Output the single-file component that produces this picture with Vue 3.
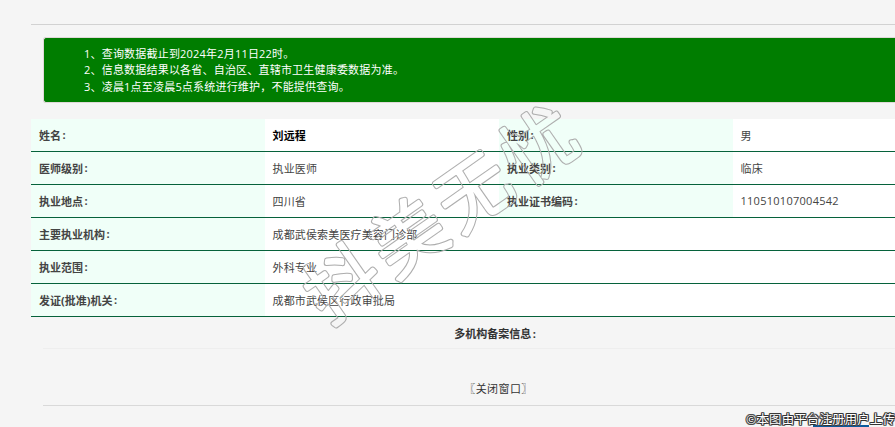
<script setup>
const rows = [
  [{ t: '姓名' }, { t: '刘远程', strong: true }, { t: '性别' }, { t: '男' }],
  [{ t: '医师级别' }, { t: '执业医师' }, { t: '执业类别' }, { t: '临床' }],
  [{ t: '执业地点' }, { t: '四川省' }, { t: '执业证书编码' }, { t: '110510107004542' }],
]
const wide = [
  ['主要执业机构', '成都武侯索美医疗美容门诊部'],
  ['执业范围', '外科专业'],
  ['发证(批准)机关', '成都市武侯区行政审批局'],
]
const notes = [
  '1、查询数据截止到2024年2月11日22时。',
  '2、信息数据结果以各省、自治区、直辖市卫生健康委数据为准。',
  '3、凌晨1点至凌晨5点系统进行维护\uFF0C不能提供查询。',
]
</script>

<template>
  <div class="page">
    <div class="wrap">
      <hr class="rule top" />
      <div class="alert">
        <p v-for="n in notes" :key="n">{{ n }}</p>
      </div>
      <div class="table">
        <div v-for="(r, i) in rows" :key="i" class="row">
          <div class="cell label">{{ r[0].t }}<span class="colon">:</span></div>
          <div class="cell value" :class="{ strong: r[1].strong }">{{ r[1].t }}</div>
          <div class="cell label">{{ r[2].t }}<span class="colon">:</span></div>
          <div class="cell value num">{{ r[3].t }}</div>
        </div>
        <div v-for="w in wide" :key="w[0]" class="row">
          <div class="cell label">{{ w[0] }}<span class="colon">:</span></div>
          <div class="cell value span">{{ w[1] }}</div>
        </div>
      </div>
      <div class="multi">多机构备案信息<span class="colon">:</span></div>
      <div class="close">〖关闭窗口〗</div>
      <hr class="rule bottom" />
    </div>
    <svg class="stamp" width="895" height="427" viewBox="0 0 895 427">
      <defs>
        <mask id="stamp-ring" maskUnits="userSpaceOnUse" x="0" y="0" width="895" height="427">
          <g class="stamp-text" transform="rotate(-35 445 213)">
            <text x="445" y="238" text-anchor="middle" fill="#fff" stroke="#fff" stroke-width="5.5">抖美无忧</text>
            <text x="445" y="238" text-anchor="middle" fill="#000" stroke="#000" stroke-width="3.5">抖美无忧</text>
          </g>
        </mask>
      </defs>
      <rect width="895" height="427" fill="#adadad" mask="url(#stamp-ring)" />
    </svg>
    <div class="strip"></div>
    <div class="credit">©本图由平台注册用户上传</div>
  </div>
</template>

<style>
html, body { margin: 0; background: #f5f5f5; overflow: hidden; }
</style>

<style scoped>
.page {
  position: relative;
  height: 427px;
  overflow: hidden;
  font-family: "Open Sans", "Noto Sans CJK SC", sans-serif;
  font-size: 11px;
  color: #333;
}
.wrap {
  width: 936px;
  margin-left: 31px;
  padding-top: 24px;
}
.rule { margin: 0; border: 0; height: 1px; background: #d2d2d2; }
.alert {
  margin: 12px 0 0 12px;
  height: 66px;
  padding: 8px 0 0 40px;
  box-sizing: border-box;
  background: #007d00;
  border: 1px solid #e0d8d8;
  border-right: 0;
  border-radius: 3px 0 0 3px;
  color: #fff;
  line-height: 16.4px;
  letter-spacing: 0.2px;
}
.alert p { margin: 0; }
.table { margin-top: 16px; }
.row {
  display: grid;
  grid-template-columns: repeat(4, 234px);
  height: 33px;
  box-sizing: border-box;
  border-bottom: 1px solid #06623b;
}
.cell {
  display: flex;
  align-items: center;
  padding: 0 0 1px 8px;
  white-space: nowrap;
}
.colon { margin-left: 1.5px; }
.label { background: #f0fff8; font-weight: 700; color: #444; }
.value { background: #fff; color: #444; letter-spacing: 0.15px; padding-left: 7.5px; }
.strong { font-weight: 700; color: #000; }
.num { letter-spacing: 0.27px; }
.span { grid-column: span 3; }
.multi {
  margin-left: 12px;
  width: 904px;
  height: 31px;
  line-height: 33px;
  text-align: center;
  font-weight: 700;
  color: #333;
  border-bottom: 1px solid #eee;
}
.close {
  margin-top: 32px;
  width: 935px;
  text-align: center;
  line-height: 16px;
  color: #333;
  letter-spacing: 0.4px;
  font-feature-settings: "palt";
}
.bottom { margin: 8px 0 0 12px; background: #d9d9d9; }
.stamp {
  position: absolute;
  left: 0;
  top: 0;
  pointer-events: none;
}
.stamp-text {
  font-family: "Noto Sans CJK SC", sans-serif;
  font-weight: 300;
  font-size: 72px;
  letter-spacing: 8px;
  stroke-linejoin: round;
  stroke-linecap: round;
}
.strip {
  position: absolute;
  left: 813px;
  top: 425px;
  width: 56px;
  height: 2px;
  background: #0b5a9c;
}
.credit {
  position: absolute;
  right: 0;
  top: 411px;
  font-family: "Noto Sans CJK SC", sans-serif;
  font-size: 12.4px;
  letter-spacing: 0.2px;
  line-height: 17px;
  white-space: nowrap;
  color: #fff;
  text-shadow: 1px 0 0 #333, -1px 0 0 #333, 0 1px 0 #333, 0 -1px 0 #333, 1px 1px 0 #555, -1px -1px 0 #555, 1px -1px 0 #555, -1px 1px 0 #555;
}
</style>
